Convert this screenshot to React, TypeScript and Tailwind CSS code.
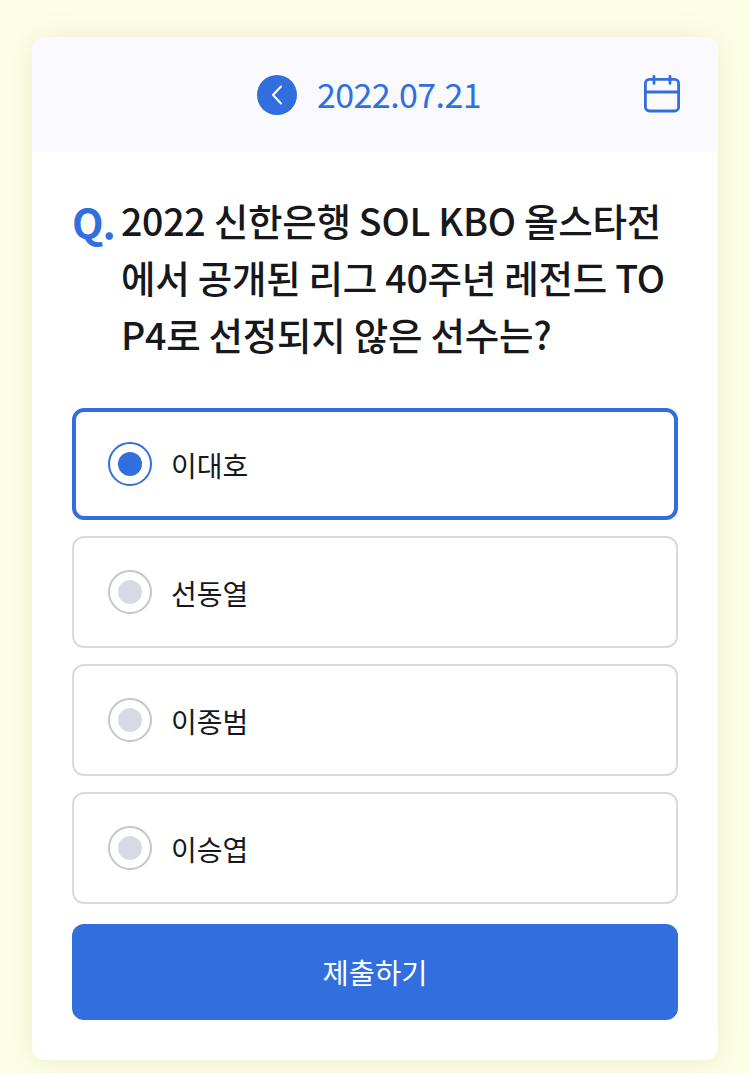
const options = ["이대호", "선동열", "이종범", "이승엽"];
const font = "font-['Noto_Sans_CJK_KR','Noto_Sans',sans-serif]";

export default function App() {
  return (
    <div className={`h-[1073px] w-[750px] overflow-hidden bg-[#fdfee6] px-8 pt-[37px] ${font}`}>
      <div className="h-[1023px] overflow-hidden rounded-xl bg-white shadow-[0_2px_28px_rgba(150,150,60,0.16)]">
        <div className="relative flex h-[115px] items-center justify-center bg-[#f9f9fe] pr-[12px]">
          <div className="flex items-center gap-5">
            <div className="flex h-10 w-10 items-center justify-center rounded-full bg-[#316fdf]">
              <svg width="14" height="22" viewBox="0 0 14 22" fill="none" stroke="white" strokeWidth="2" strokeLinecap="round" strokeLinejoin="round"><path d="M11 2.5 3 11l8 8.5" /></svg>
            </div>
            <span className="-translate-y-px text-[34px] leading-none tracking-[-0.6px] text-[#316fdf]">2022.07.21</span>
          </div>
          <svg className="absolute left-[611px] top-[38px]" width="38" height="38" viewBox="0 0 38 38" fill="none" stroke="#316fdf" strokeWidth="2.8" strokeLinecap="round"><rect x="2.4" y="4.4" width="33.2" height="31.6" rx="4" /><path d="M2.4 17h33.2M11 1.4v7M27 1.4v7" /></svg>
        </div>
        <div className="px-10">
          <div className="mt-[39px] flex">
            <span className="w-[49px] shrink-0 text-[41px] font-bold leading-[60px] tracking-[-1px] text-[#316fdf]">Q.</span>
            <p className="whitespace-nowrap text-[37.5px] font-medium leading-[57px] tracking-[-0.25px] text-[#16181c]">2022 신한은행 SOL KBO 올스타전<br />에서 공개된 리그 40주년 레전드 TO<br />P4로 선정되지 않은 선수는?</p>
          </div>
          <div className="mt-[46px] flex flex-col gap-4">
            {options.map((o, i) => (
              <div key={o} className={`flex h-28 items-center rounded-xl bg-white ${i === 0 ? "border-4 border-[#316fdf] pl-[32px]" : "border-2 border-[#d9dade] pl-[34px]"}`}>
                <span className={`flex h-11 w-11 items-center justify-center rounded-full border-2 ${i === 0 ? "border-[#316fdf]" : "border-[#c2c5cc]"}`}>
                  <span className={`h-6 w-6 rounded-full ${i === 0 ? "bg-[#316fdf]" : "bg-[#d8dbe4]"}`} />
                </span>
                <span className="ml-[19px] pt-px text-[28px] leading-none text-[#16181c]">{o}</span>
              </div>
            ))}
          </div>
          <div className="mt-5 flex h-24 items-center justify-center rounded-xl bg-[#316fdf] text-[28.5px] text-white">제출하기</div>
        </div>
      </div>
    </div>
  );
}
